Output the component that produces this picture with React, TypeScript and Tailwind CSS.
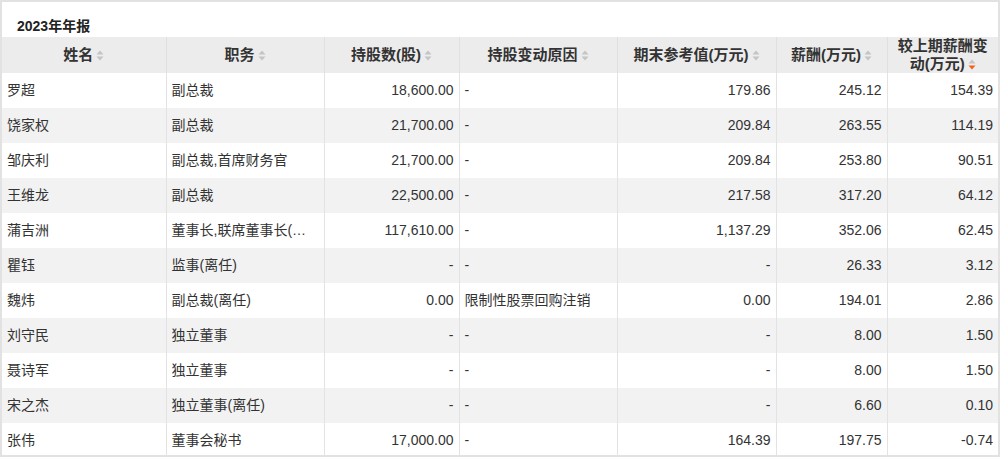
import React from "react"

const rows = [
  ["罗超", "副总裁", "18,600.00", "-", "179.86", "245.12", "154.39"],
  ["饶家权", "副总裁", "21,700.00", "-", "209.84", "263.55", "114.19"],
  ["邹庆利", "副总裁,首席财务官", "21,700.00", "-", "209.84", "253.80", "90.51"],
  ["王维龙", "副总裁", "22,500.00", "-", "217.58", "317.20", "64.12"],
  ["蒲吉洲", "董事长,联席董事长(执行)", "117,610.00", "-", "1,137.29", "352.06", "62.45"],
  ["瞿钰", "监事(离任)", "-", "-", "-", "26.33", "3.12"],
  ["魏炜", "副总裁(离任)", "0.00", "限制性股票回购注销", "0.00", "194.01", "2.86"],
  ["刘守民", "独立董事", "-", "-", "-", "8.00", "1.50"],
  ["聂诗军", "独立董事", "-", "-", "-", "8.00", "1.50"],
  ["宋之杰", "独立董事(离任)", "-", "-", "-", "6.60", "0.10"],
  ["张伟", "董事会秘书", "17,000.00", "-", "164.39", "197.75", "-0.74"],
]

const widths = ["w-[164px]", "w-[158px]", "w-[135px]", "w-[158px]", "w-[159px]", "w-[111px]", "w-[111px]"]
const aligns = ["text-left", "text-left", "text-right", "text-left", "text-right", "text-right", "text-right"]

function SortIcon({ active }: { active?: boolean }) {
  return (
    <svg width="8" height="11" viewBox="0 0 8 11" className="inline-block ml-[3px] align-[-1px]">
      <path d="M4 0.5 L7.5 4.5 L0.5 4.5 Z" fill="#c4c4c4" />
      <path d="M0.5 6.5 L7.5 6.5 L4 10.5 Z" fill={active ? "#f5611b" : "#c4c4c4"} />
    </svg>
  )
}

export default function App() {
  return (
    <div
      className="w-[1000px] h-[457px] overflow-hidden bg-white border-2 border-[#e2e2e2] text-[14px] text-[#333]"
      style={{ fontFamily: '"Liberation Sans", Arial, "Noto Sans CJK SC", sans-serif' }}
    >
      {/* Title */}
      <div className="h-[35px] pl-[15px] pt-[15px] font-bold text-[14px] leading-[18px] text-[#222]">2023年年报</div>

      <table className="table-fixed border-collapse w-[996px]">
        <thead>
          <tr className="bg-[#ececec] h-[36px] text-[15px]">
            {["姓名", "职务", "持股数(股)", "持股变动原因", "期末参考值(万元)", "薪酬(万元)"].map((h, i) => (
              <th key={h} className={`${widths[i]} border-l border-[#e0e0e0] first:border-l-0 font-bold text-center leading-[18px] px-1 py-0`}>
                {h}
                <SortIcon />
              </th>
            ))}
            <th className={`${widths[6]} border-l border-[#e0e0e0] font-bold text-center leading-[18px] px-1 py-0`}>
              较上期薪酬变动(万元)
              <SortIcon active />
            </th>
          </tr>
        </thead>
        <tbody>
          {rows.map((r, ri) => (
            <tr key={r[0]} className={`h-[35px] ${ri % 2 === 1 ? "bg-[#f2f2f2]" : "bg-white"}`}>
              {r.map((c, ci) => (
                <td
                  key={ci}
                  className={`${widths[ci]} ${aligns[ci]} border-l border-[#e3e3e3] first:border-l-0 px-[5px] whitespace-nowrap overflow-hidden text-ellipsis`}
                >
                  {c}
                </td>
              ))}
            </tr>
          ))}
        </tbody>
      </table>
    </div>
  )
}
